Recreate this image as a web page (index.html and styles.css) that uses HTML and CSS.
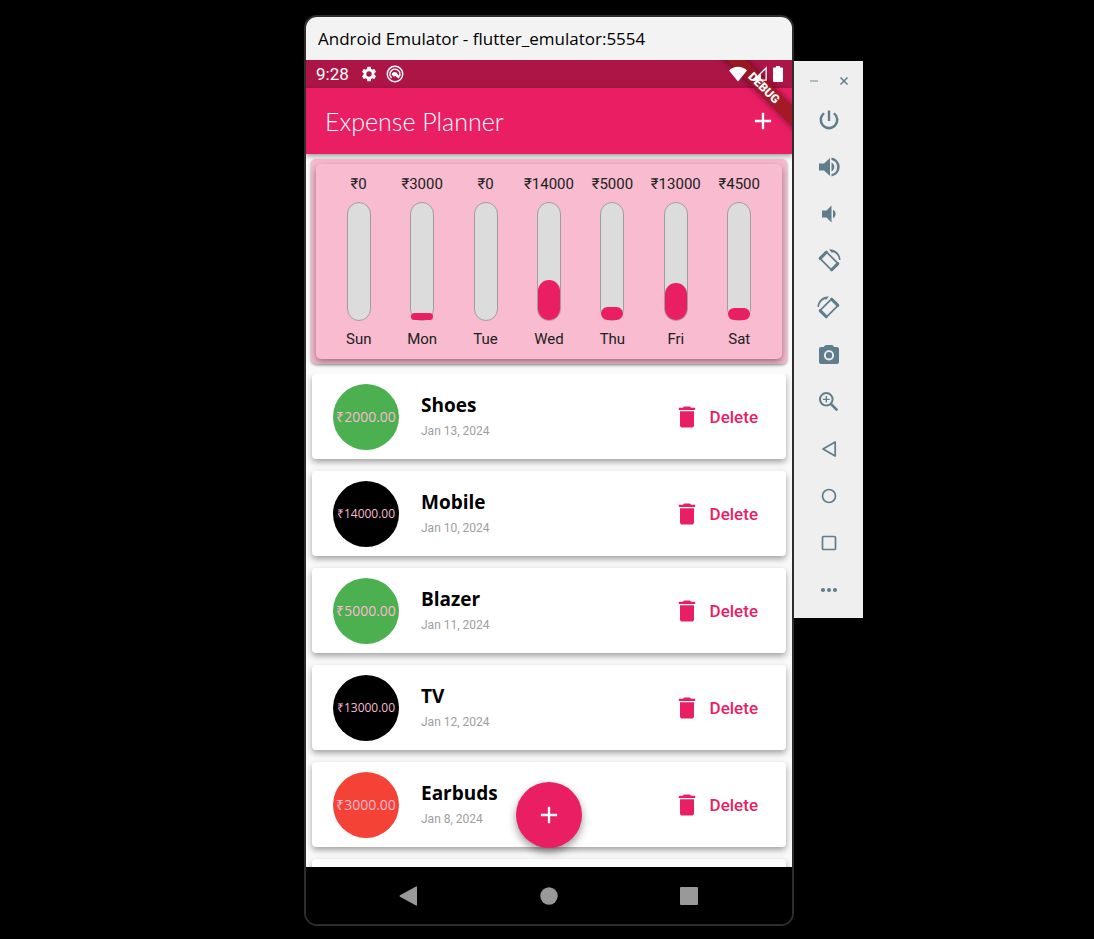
FILE: index.html
```html
<!DOCTYPE html>
<html lang="en">
<head>
<meta charset="utf-8">
<meta name="viewport" content="width=device-width, initial-scale=1">
<title>Android Emulator - flutter_emulator:5554</title>
<link rel="stylesheet" href="styles.css">
</head>
<body>
<svg class="defs" aria-hidden="true">
  <symbol id="trash" viewBox="0 0 24 24"><path d="M6 19c0 1.100.9 2 2 2h8c1.100 0 2-.9 2-2V7H6v12zM19 4h-3.500l-1-1h-5l-1 1H5v2h14V4z"/></symbol>
  <symbol id="plus" viewBox="0 0 24 24"><path d="M19 13h-6v6h-2v-6H5v-2h6V5h2v6h6v2z"/></symbol>
  <symbol id="rotate" viewBox="0 0 24 24"><rect x="3.400" y="7.400" width="17.200" height="9.200" rx="1" transform="rotate(45 12 12)" fill="none" stroke="currentColor" stroke-width="1.700"/><path d="M3.200 9.400 9.400 3.200M14.600 20.800l6.200-6.200" fill="none" stroke="currentColor" stroke-width="3" stroke-linecap="round"/><path d="M12 .6c6.300-.8 11 3.800 11.600 10.300h-1.500c-.6-4-2.900-6.800-6.200-8l-.8 1.200z"/></symbol>
</svg>
<main class="desktop">
  <section class="phone" aria-label="Emulated phone">
    <header class="titlebar">Android Emulator - flutter_emulator:5554</header>
    <div class="screen">
      <div class="status">
        <span class="clock">9:28</span>
        <svg class="status-icon" viewBox="0 0 24 24"><path fill-rule="evenodd" d="M19.140 12.940c.04-.3.060-.61.060-.94 0-.32-.02-.64-.07-.94l2.030-1.580a.49.49 0 0 0 .12-.61l-1.920-3.320a.49.49 0 0 0-.59-.22l-2.390.96c-.5-.38-1.030-.7-1.620-.94l-.36-2.540a.48.48 0 0 0-.48-.41h-3.840a.48.48 0 0 0-.47.41l-.36 2.540c-.59.24-1.130.57-1.620.94l-2.390-.96a.48.48 0 0 0-.59.22L2.740 8.870a.48.48 0 0 0 .12.61l2.030 1.580c-.05.3-.09.63-.09.94s.02.64.07.94l-2.030 1.580a.49.49 0 0 0-.12.61l1.920 3.320c.12.22.37.29.59.22l2.390-.96c.5.38 1.030.7 1.620.94l.36 2.540c.05.24.24.41.48.41h3.840c.24 0 .44-.17.47-.41l.36-2.540c.59-.24 1.130-.56 1.620-.94l2.390.96c.22.080.47 0 .59-.22l1.920-3.320a.48.48 0 0 0-.12-.61zM12 15.600a3.600 3.600 0 1 1 0-7.200 3.600 3.600 0 0 1 0 7.200z"/></svg>
        <svg class="status-icon second" viewBox="0 0 24 24"><circle cx="12" cy="12" r="10.300" fill="none" stroke="currentColor" stroke-width="2"/><path d="M7.500 17.200a6.600 6.600 0 1 1 10.300-2" fill="none" stroke="currentColor" stroke-width="2"/><path d="M7.500 12.500c1-3 4-4 6.500-2.500l4.500 6-2 2-4-3.500-2 1z"/></svg>
        <span class="status-right">
          <svg class="signal-icon wifi" viewBox="0 0 18 16"><path d="M0 4.500C5-.5 13-.5 18 4.500L9 15.500z"/></svg>
          <svg class="signal-icon cell" viewBox="0 0 16 16"><path d="M15 1v14H1z" fill="none" stroke="currentColor" stroke-width="1.500"/><path d="M1 15 9 7v8z"/></svg>
          <svg class="signal-icon battery" viewBox="0 0 10 16"><path d="M3 0h4v1.500h2a1 1 0 0 1 1 1V15a1 1 0 0 1-1 1H1a1 1 0 0 1-1-1V2.500a1 1 0 0 1 1-1h2z"/></svg>
        </span>
      </div>
      <div class="appbar">
        <h1 class="app-title">Expense Planner</h1>
        <button class="add" aria-label="Add expense"><svg class="icon-28"><use href="#plus"/></svg></button>
      </div>
      <div class="debug-corner"><span class="debug">DEBUG</span></div>
      <div class="content">
        <div class="chart-card">
          <div class="chart">
            <div class="day"><span>₹0</span><div class="bar"></div><span>Sun</span></div>
            <div class="day"><span>₹3000</span><div class="bar"><div class="fill" style="height:6%"></div></div><span>Mon</span></div>
            <div class="day"><span>₹0</span><div class="bar"></div><span>Tue</span></div>
            <div class="day"><span>₹14000</span><div class="bar"><div class="fill" style="height:34%"></div></div><span>Wed</span></div>
            <div class="day"><span>₹5000</span><div class="bar"><div class="fill" style="height:11%"></div></div><span>Thu</span></div>
            <div class="day"><span>₹13000</span><div class="bar"><div class="fill" style="height:32%"></div></div><span>Fri</span></div>
            <div class="day"><span>₹4500</span><div class="bar"><div class="fill" style="height:10%"></div></div><span>Sat</span></div>
          </div>
        </div>
        <ul class="list">
          <li class="item"><span class="amount green">₹2000.00</span><div class="info"><h2 class="name">Shoes</h2><p class="date">Jan 13, 2024</p></div><button class="delete"><svg class="icon-28"><use href="#trash"/></svg>Delete</button></li>
          <li class="item"><span class="amount black">₹14000.00</span><div class="info"><h2 class="name">Mobile</h2><p class="date">Jan 10, 2024</p></div><button class="delete"><svg class="icon-28"><use href="#trash"/></svg>Delete</button></li>
          <li class="item"><span class="amount green">₹5000.00</span><div class="info"><h2 class="name">Blazer</h2><p class="date">Jan 11, 2024</p></div><button class="delete"><svg class="icon-28"><use href="#trash"/></svg>Delete</button></li>
          <li class="item"><span class="amount black">₹13000.00</span><div class="info"><h2 class="name">TV</h2><p class="date">Jan 12, 2024</p></div><button class="delete"><svg class="icon-28"><use href="#trash"/></svg>Delete</button></li>
          <li class="item"><span class="amount red">₹3000.00</span><div class="info"><h2 class="name">Earbuds</h2><p class="date">Jan 8, 2024</p></div><button class="delete"><svg class="icon-28"><use href="#trash"/></svg>Delete</button></li>
          <li class="item"></li>
        </ul>
        <button class="fab" aria-label="Add expense"><svg class="icon-28"><use href="#plus"/></svg></button>
      </div>
      <nav class="navbar">
        <button class="nav-button" aria-label="Back"><svg class="nav-icon" viewBox="0 0 20 20"><path d="M1 9.300 17 .4q1-.4 1 .6v18q0 1-1 .6L1 10.700q-1-.7 0-1.400z"/></svg></button>
        <button class="nav-button" aria-label="Home"><svg class="nav-icon" viewBox="0 0 20 20"><circle cx="10" cy="10" r="8.700"/></svg></button>
        <button class="nav-button" aria-label="Overview"><svg class="nav-icon" viewBox="0 0 20 20"><rect x="1" y="1" width="18" height="18" rx="1"/></svg></button>
      </nav>
    </div>
  </section>
  <aside class="tools" aria-label="Emulator controls">
    <div class="window-buttons">
      <button class="win" aria-label="Minimize"><svg class="win-icon minimize" viewBox="0 0 10 10"><path d="M1 5h8" stroke="currentColor" stroke-width="1.500"/></svg></button>
      <button class="win" aria-label="Close"><svg class="win-icon" viewBox="0 0 10 10"><path d="M1.500 1.500l7 7M8.500 1.500l-7 7" stroke="currentColor" stroke-width="1.500"/></svg></button>
    </div>
    <button class="tool" aria-label="Power"><svg class="tool-icon" viewBox="0 0 24 24"><path d="M13.200 2.500h-2.400v10.500h2.400zM17.800 4.400l-1.700 1.700a7 7 0 1 1-8.200 0L6.200 4.400a9.500 9.500 0 1 0 11.600 0z"/></svg></button>
    <button class="tool" aria-label="Volume up"><svg class="tool-icon" viewBox="0 0 24 24"><path d="M2 8.500v7h5l6 5.500V3L7 8.500zM14.500 7.500v9c1.800-.9 2.800-2.600 2.800-4.500s-1-3.600-2.800-4.500zM14.500 2.500v2.400a7.300 7.300 0 0 1 0 14.200v2.400a9.600 9.600 0 0 0 0-19z"/></svg></button>
    <button class="tool" aria-label="Volume down"><svg class="tool-icon" viewBox="0 0 24 24"><path d="M5 8.500v7h4.500l5 5V3.500l-5 5zM16 7.800v8.400c1.600-.8 2.600-2.300 2.600-4.200s-1-3.400-2.600-4.200z"/></svg></button>
    <button class="tool" aria-label="Rotate left"><svg class="tool-icon"><use href="#rotate"/></svg></button>
    <button class="tool" aria-label="Rotate right"><svg class="tool-icon mirror"><use href="#rotate"/></svg></button>
    <button class="tool" aria-label="Take screenshot"><svg class="tool-icon" viewBox="0 0 24 24"><path fill-rule="evenodd" d="M8.500 2 6.800 4H4a2 2 0 0 0-2 2v13a2 2 0 0 0 2 2h16a2 2 0 0 0 2-2V6a2 2 0 0 0-2-2h-2.800l-1.700-2zM12 7.200a5.100 5.100 0 1 1 0 10.200 5.100 5.100 0 0 1 0-10.200zm0 1.900a3.200 3.200 0 1 0 0 6.400 3.200 3.200 0 0 0 0-6.400z"/></svg></button>
    <button class="tool" aria-label="Zoom"><svg class="tool-icon" viewBox="0 0 24 24"><g fill="none" stroke="currentColor"><circle cx="9.300" cy="9.300" r="6.300" stroke-width="2"/><path d="M14 14l6.300 6.300" stroke-width="2.500"/><path d="M9.300 6v6.600M6 9.300h6.600" stroke-width="1.300"/></g></svg></button>
    <button class="tool" aria-label="Back"><svg class="tool-icon" viewBox="0 0 24 24"><path d="M18.200 5v14L6 12z" fill="none" stroke="currentColor" stroke-width="1.700" stroke-linejoin="round"/></svg></button>
    <button class="tool" aria-label="Home"><svg class="tool-icon" viewBox="0 0 24 24"><circle cx="12" cy="12" r="6.500" fill="none" stroke="currentColor" stroke-width="1.700"/></svg></button>
    <button class="tool" aria-label="Overview"><svg class="tool-icon" viewBox="0 0 24 24"><rect x="5.500" y="5.500" width="13" height="13" rx="1" fill="none" stroke="currentColor" stroke-width="1.700"/></svg></button>
    <button class="tool" aria-label="More"><svg class="tool-icon" viewBox="0 0 24 24"><circle cx="6" cy="12" r="2.100"/><circle cx="12" cy="12" r="2.100"/><circle cx="18" cy="12" r="2.100"/></svg></button>
  </aside>
</main>
</body>
</html>
```
FILE: styles.css
```css
* { box-sizing: border-box; }

body {
  margin: 0;
  background: #000;
  font-family: Roboto, "Liberation Sans", sans-serif;
}

h1, h2, p, ul { margin: 0; padding: 0; }

button {
  display: flex;
  align-items: center;
  justify-content: center;
  padding: 0;
  border: 0;
  background: none;
  color: inherit;
  font: inherit;
  cursor: pointer;
}

svg { display: block; flex: none; fill: currentColor; }

.defs { position: absolute; width: 0; height: 0; }

.icon-28 { width: 28px; height: 28px; }

.desktop {
  display: grid;
  grid-template-columns: 304fr minmax(460px, 490fr) minmax(69px, 300fr);
  align-items: start;
  min-height: 100vh;
  padding: 15px 0 13px;
}

/* Phone window */
.phone {
  display: flex;
  grid-column: 2;
  flex-direction: column;
  height: calc(100vh - 28px);
  min-height: 600px;
  border: 2px solid #2e2c2d;
  border-radius: 13px;
  overflow: hidden;
}

.titlebar {
  padding: 0 12px;
  background: #f3f3f3;
  color: #000;
  font-family: "Open Sans", "Noto Sans", sans-serif;
  font-size: 17px;
  line-height: 43px;
  white-space: nowrap;
}

.screen {
  position: relative;
  display: flex;
  flex: 1;
  flex-direction: column;
  min-height: 0;
}

.status {
  display: flex;
  align-items: center;
  height: 28px;
  padding: 0 9px 0 10px;
  background: #ad1547;
  color: #fff;
}

.clock { font-size: 17px; line-height: 28px; }

.status-icon { width: 18px; height: 18px; margin-left: 11px; }
.second { margin-left: 8px; }

.status-right {
  z-index: 3;
  display: flex;
  align-items: center;
  gap: 6px;
  margin-left: auto;
}

.signal-icon { height: 16px; }
.wifi { width: 18px; }
.cell { width: 14px; }
.battery { width: 10px; }

.appbar {
  z-index: 1;
  display: flex;
  align-items: center;
  justify-content: space-between;
  height: 66px;
  padding: 0 15px 0 19px;
  background: #e91e63;
  color: #fff;
  box-shadow: 0 2px 5px rgba(0, 0, 0, .4);
}

.app-title {
  font-family: Lato, sans-serif;
  font-size: 25px;
  font-weight: 300;
  line-height: 32px;
}

/* Diagonal ribbon lying over the corner of the screen */
.debug-corner {
  position: absolute;
  z-index: 2;
  top: 0;
  right: 0;
  width: 90px;
  height: 90px;
  overflow: hidden;
  pointer-events: none;
}

.debug {
  position: absolute;
  top: 21px;
  right: -32px;
  width: 120px;
  background: rgba(148, 24, 24, .8);
  box-shadow: 0 0 7px rgba(0, 0, 0, .5);
  color: #fff;
  font-size: 12px;
  font-weight: 900;
  line-height: 14px;
  text-align: center;
  transform: rotate(45deg);
}

.content {
  position: relative;
  display: flex;
  flex: 1;
  flex-direction: column;
  gap: 10px;
  min-height: 0;
  padding-top: 5px;
  background: #fafafa;
}

.chart-card {
  margin: 0 5px;
  padding: 5px;
  border-radius: 5px;
  background: #f8bbd0;
  box-shadow: 0 1px 3px rgba(0, 0, 0, .4);
}

.chart {
  display: flex;
  padding: 10px 11px;
  border-radius: 5px;
  background: #f8bbd0;
  box-shadow: 0 3px 7px rgba(0, 0, 0, .4);
}

.day {
  display: flex;
  flex: 1 1 0;
  flex-direction: column;
  align-items: center;
  gap: 8px;
  min-width: 0;
  color: #212121;
  font-size: 15px;
  line-height: 20px;
}

.bar {
  display: flex;
  align-items: flex-end;
  width: 24px;
  height: 119px;
  border: 1px solid #9e9e9e;
  border-radius: 12px;
  background: #dcdcdc;
}

.fill { width: 100%; border-radius: 11px; background: #e91e63; }

.list {
  display: flex;
  flex: 1;
  flex-direction: column;
  gap: 12px;
  min-height: 0;
  padding: 0 6px;
  overflow: hidden;
  list-style: none;
}

.item {
  display: flex;
  flex: none;
  align-items: center;
  gap: 22px;
  height: 85px;
  padding: 0 28px 0 21px;
  border-radius: 4px;
  background: #fff;
  box-shadow: 0 3px 6px rgba(0, 0, 0, .36);
}

.amount {
  display: flex;
  flex: none;
  align-items: center;
  justify-content: center;
  width: 66px;
  height: 66px;
  border-radius: 50%;
  color: #f8bbd0;
  font-family: "Open Sans", sans-serif;
  font-size: 14px;
}

.green { background: #4caf50; }
.black { background: #000; font-size: 12px; }
.red { background: #f44336; }

.info { flex: 1; }

.name {
  color: #000;
  font-family: "Open Sans", sans-serif;
  font-size: 19px;
  font-weight: 700;
  line-height: 28px;
}

.date { color: #9e9e9e; font-size: 12px; line-height: 24px; }

.delete {
  gap: 9px;
  color: #e91e63;
  font-size: 17px;
  font-weight: 500;
}

/* Floats over the list */
.fab {
  position: absolute;
  bottom: 19px;
  left: calc(50% - 33px);
  width: 66px;
  height: 66px;
  border-radius: 50%;
  background: #e91e63;
  color: #fff;
  box-shadow: 0 4px 9px rgba(0, 0, 0, .4);
}

.navbar {
  z-index: 1;
  display: flex;
  align-items: center;
  justify-content: center;
  gap: 92px;
  height: 57px;
  background: #000;
  color: #999;
}

.nav-button { width: 48px; height: 48px; }
.nav-icon { width: 20px; height: 20px; }

/* Emulator side panel */
.tools {
  display: flex;
  flex-direction: column;
  width: 69px;
  margin-top: 46px;
  padding-bottom: 5px;
  background: #efefef;
  color: #607d8b;
}

.window-buttons {
  display: flex;
  justify-content: center;
  gap: 10px;
  padding: 10px 0 5px;
}

.win { width: 20px; height: 20px; }
.win-icon { width: 10px; height: 10px; }
.minimize { opacity: .6; }

.tool { height: 47px; }
.tool-icon { width: 24px; height: 24px; overflow: visible; }
.mirror { transform: scaleX(-1); }
```
